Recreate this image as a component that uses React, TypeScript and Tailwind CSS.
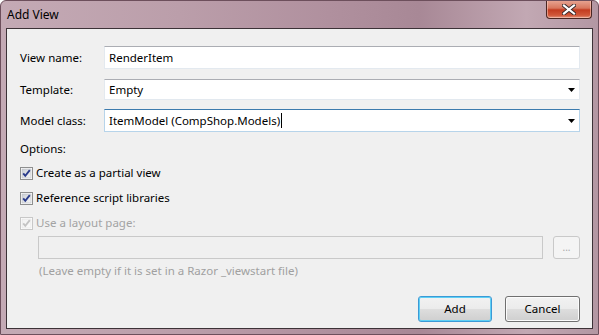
import React from "react";

const font = { fontFamily: '"Noto Sans", "Open Sans", sans-serif' };

function Check({ disabled }: { disabled?: boolean }) {
  return (
    <svg width="13" height="13" viewBox="0 0 13 13" className="shrink-0">
      <defs>
        <linearGradient id={disabled ? "cbd" : "cb"} x1="0" y1="0" x2="1" y2="1">
          <stop offset="0" stopColor={disabled ? "#f2f2f2" : "#cbcfd5"} />
          <stop offset="1" stopColor={disabled ? "#fafafa" : "#f6f6f6"} />
        </linearGradient>
      </defs>
      <rect x="0.5" y="0.5" width="12" height="12" fill="#fff" stroke={disabled ? "#c8c8c8" : "#8e8f8f"} />
      <rect x="2" y="2" width="9" height="9" fill={`url(#${disabled ? "cbd" : "cb"})`} stroke={disabled ? "#e0e0e0" : "#b8bcc3"} strokeWidth="0.6" />
      <path d="M3.2 6.3 L5.3 8.8 L9.8 3.2" fill="none" stroke={disabled ? "#c4c4c4" : "#2b3c8c"} strokeWidth="1.9" />
    </svg>
  );
}

function Arrow() {
  return (
    <svg width="7" height="4" viewBox="0 0 7 4" className="shrink-0">
      <path d="M0 0 H7 L3.5 4 Z" fill="#000" />
    </svg>
  );
}

export default function App() {
  return (
    <div
      className="w-[599px] h-[335px] flex flex-col overflow-hidden text-[11.5px] text-black rounded-t-[6px] border border-[#6d4f5c] bg-[linear-gradient(90deg,#c4aab5_0%,#bb9eaa_30%,#b0909e_55%,#a88896_70%,#c2a8b3_88%,#b397a3_100%)]"
      style={font}
    >
      {/* title bar */}
      <div className="h-[27px] flex items-start shrink-0 relative">
        <div className="pl-[6px] pt-[5px] leading-[18px] text-[12px] text-black">Add View</div>
        <div className="ml-auto mr-[6px] w-[46px] h-[19px] -mt-[1px] rounded-b-[4px] border border-[#4a2622] border-t-0 bg-[linear-gradient(180deg,#e9a896_0%,#d8775e_45%,#c33c20_55%,#d1583a_85%,#e29680_100%)] flex items-center justify-center shadow-[inset_0_0_0_1px_rgba(255,220,210,0.5)]">
          <svg width="14" height="11" viewBox="0 0 14 11">
            <path d="M2 1.5 L12 9.5 M12 1.5 L2 9.5" stroke="#3a2a2a" strokeWidth="4" strokeLinecap="square" />
            <path d="M2 1.5 L12 9.5 M12 1.5 L2 9.5" stroke="#ffffff" strokeWidth="2.2" strokeLinecap="square" />
          </svg>
        </div>
      </div>

      {/* content */}
      <div className="flex-1 mx-[5px] mb-[5px] border border-[#3c3237] bg-[#f0f0f0] pl-[13px] pr-[12px] pt-[17px] flex flex-col">
        <div className="flex items-center h-[23px]">
          <div className="w-[84px]">View name:</div>
          <div className="flex-1 h-[23px] bg-white border border-[#e3e9ef] border-t-[#abadb3] flex items-center pl-[4px]">RenderItem</div>
        </div>
        <div className="flex items-center h-[21px] mt-[10px]">
          <div className="w-[84px]">Template:</div>
          <div className="flex-1 h-[21px] bg-white border border-[#e3e9ef] border-t-[#abadb3] flex items-center pl-[4px] pr-[4px]">
            <span className="flex-1">Empty</span>
            <Arrow />
          </div>
        </div>
        <div className="flex items-center h-[23px] mt-[9px]">
          <div className="w-[84px]">Model class:</div>
          <div className="flex-1 h-[23px] bg-white border border-[#b7d4ea] border-t-[#3d7bad] flex items-center pl-[4px] pr-[4px]">
            <span>ItemModel (CompShop.Models)</span>
            <span className="w-px h-[15px] bg-black ml-[1px]" />
            <span className="flex-1" />
            <Arrow />
          </div>
        </div>

        <div className="mt-[9px] leading-[16px]">Options:</div>
        <div className="mt-[8px] flex items-center gap-[3px] h-[16px]">
          <Check />
          <span>Create as a partial view</span>
        </div>
        <div className="mt-[9px] flex items-center gap-[3px] h-[16px]">
          <Check />
          <span>Reference script libraries</span>
        </div>
        <div className="mt-[9px] flex items-center gap-[3px] h-[16px] text-[#a3a3a3]">
          <Check disabled />
          <span>Use a layout page:</span>
        </div>
        <div className="mt-[5px] flex items-center pl-[18px] h-[23px]">
          <div className="flex-1 h-[23px] border border-[#c9c9c9] bg-[#f0f0f0]" />
          <div className="ml-[10px] w-[27px] h-[23px] rounded-[3px] border border-[#c9c9c9] bg-[#f4f4f4] flex items-center justify-center text-[#a8a8a8] text-[10px] leading-none pb-[2px]">...</div>
        </div>
        <div className="mt-[4px] pl-[19px] leading-[16px] text-[#a0a0a0]">(Leave empty if it is set in a Razor _viewstart file)</div>

        <div className="mt-[17px] flex justify-end gap-[13px]">
          <div className="w-[74px] h-[26px] rounded-[3px] border border-[#3c9ad6] shadow-[inset_0_0_0_1px_#5fd0f5] bg-[linear-gradient(180deg,#f2f2f2_0%,#ebebeb_48%,#dddddd_52%,#cfcfcf_100%)] flex items-center justify-center">Add</div>
          <div className="w-[75px] h-[26px] rounded-[3px] border border-[#707070] shadow-[inset_0_0_0_1px_#fcfcfc] bg-[linear-gradient(180deg,#f2f2f2_0%,#ebebeb_48%,#dddddd_52%,#cfcfcf_100%)] flex items-center justify-center">Cancel</div>
        </div>
      </div>
    </div>
  );
}
